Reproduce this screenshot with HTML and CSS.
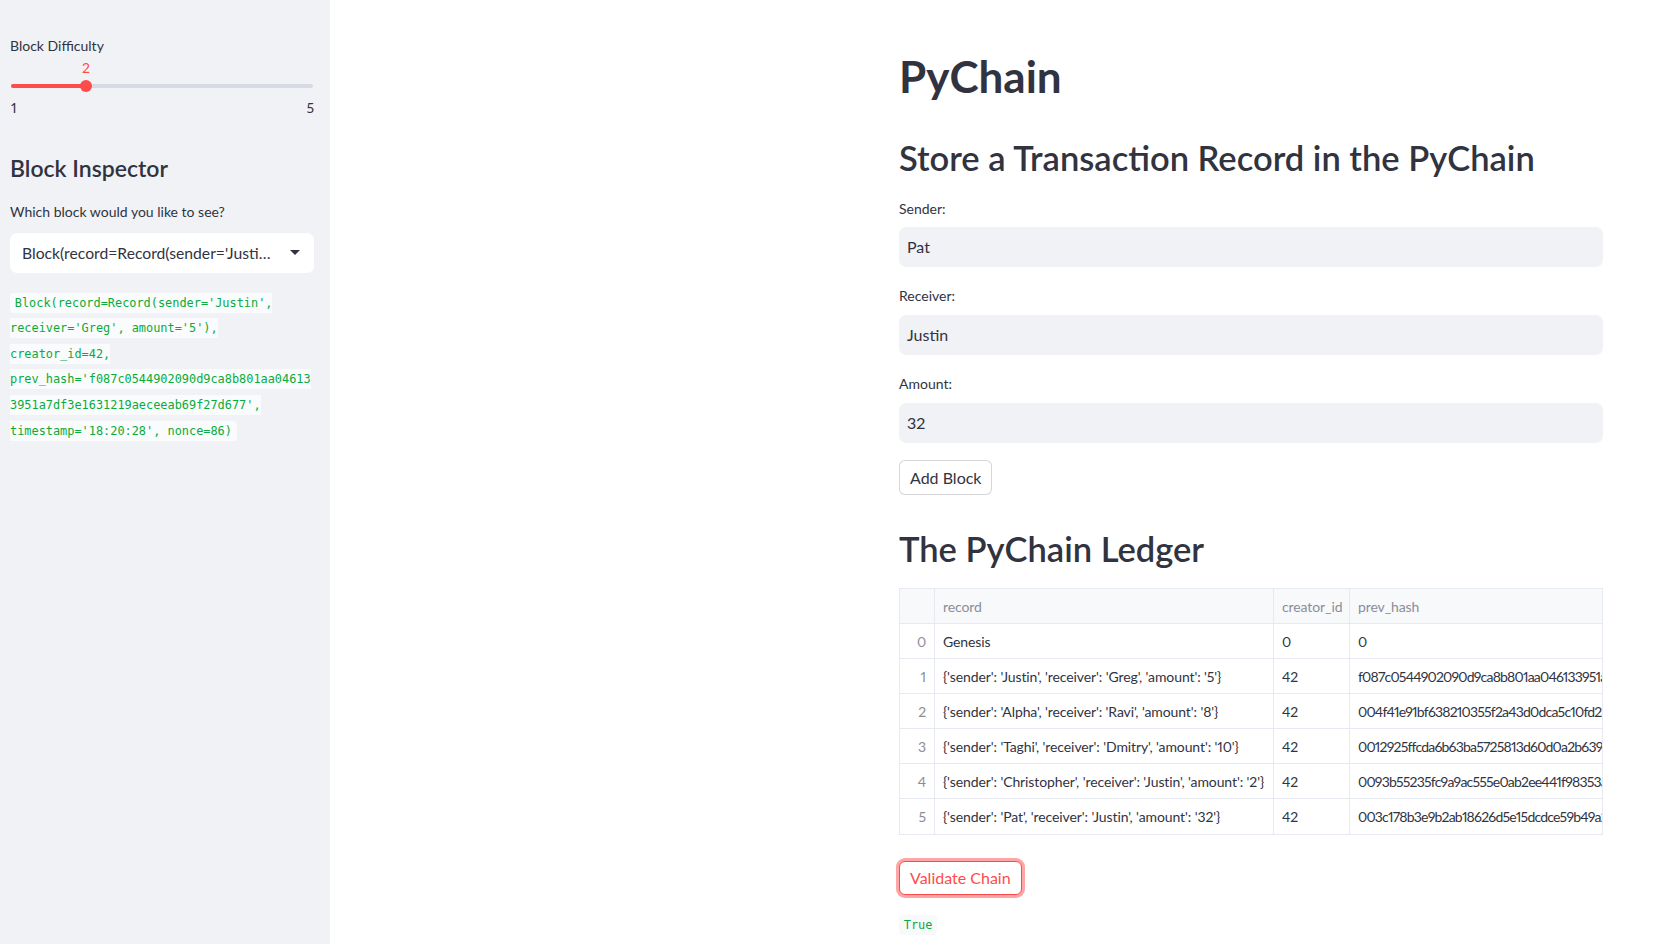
FILE: index.html
```html
<!DOCTYPE html>
<html>
<head>
<meta charset="utf-8">
<title>PyChain</title>
<link rel="stylesheet" href="styles.css">
</head>
<body>
<div class="app">
  <aside class="sidebar">
    <div class="field-label">Block Difficulty</div>
    <div class="slider">
      <div class="slider-value-row"><span class="slider-value">2</span></div>
      <div class="slider-track">
        <div class="slider-fill"></div>
        <div class="slider-thumb"></div>
      </div>
      <div class="slider-ticks"><span>1</span><span>5</span></div>
    </div>
    <h2 class="side-title">Block Inspector</h2>
    <div class="field-label">Which block would you like to see?</div>
    <div class="select">
      <span class="select-text">Block(record=Record(sender='Justi…</span>
      <svg class="select-caret" width="10" height="5" viewBox="0 0 10 5"><path d="M0 0 L10 0 L5 5 Z" fill="#31333f"/></svg>
    </div>
    <p class="code-para"><code class="inline-code">Block(record=Record(sender='Justin',<br>receiver='Greg', amount='5'),<br>creator_id=42,<br>prev_hash='f087c0544902090d9ca8b801aa04613<br>3951a7df3e1631219aeceeab69f27d677',<br>timestamp='18:20:28', nonce=86)</code></p>
  </aside>
  <main class="main">
    <div class="content">
      <h1 class="title">PyChain</h1>
      <h2 class="section">Store a Transaction Record in the PyChain</h2>
      <div class="form-field">
        <div class="field-label">Sender:</div>
        <div class="text-input">Pat</div>
      </div>
      <div class="form-field">
        <div class="field-label">Receiver:</div>
        <div class="text-input">Justin</div>
      </div>
      <div class="form-field">
        <div class="field-label">Amount:</div>
        <div class="text-input">32</div>
      </div>
      <button class="btn">Add Block</button>
      <h2 class="section ledger">The PyChain Ledger</h2>
      <div class="table-wrap">
        <table class="ledger-table">
          <colgroup>
            <col class="c-idx"><col class="c-rec"><col class="c-cid"><col class="c-hash">
          </colgroup>
          <thead>
            <tr><th class="idx"></th><th>record</th><th>creator_id</th><th>prev_hash</th></tr>
          </thead>
          <tbody>
            <tr><td class="idx">0</td><td>Genesis</td><td>0</td><td>0</td></tr>
            <tr><td class="idx">1</td><td>{'sender': 'Justin', 'receiver': 'Greg', 'amount': '5'}</td><td>42</td><td class="hash">f087c0544902090d9ca8b801aa046133951a7df3e1631219aeceeab69f27d677</td></tr>
            <tr><td class="idx">2</td><td>{'sender': 'Alpha', 'receiver': 'Ravi', 'amount': '8'}</td><td>42</td><td class="hash">004f41e91bf638210355f2a43d0dca5c10fd2a0c7d9e4b0b1f6a2f3c5e9d8a7b</td></tr>
            <tr><td class="idx">3</td><td>{'sender': 'Taghi', 'receiver': 'Dmitry', 'amount': '10'}</td><td>42</td><td class="hash">0012925ffcda6b63ba5725813d60d0a2b639e4a1c7f0b2d8e3a5c6f9b1d4e7a2</td></tr>
            <tr><td class="idx">4</td><td>{'sender': 'Christopher', 'receiver': 'Justin', 'amount': '2'}</td><td>42</td><td class="hash">0093b55235fc9a9ac555e0ab2ee441f98353a7c2e1d0b4f6a9c8e5d3b2a1f0e7</td></tr>
            <tr><td class="idx">5</td><td>{'sender': 'Pat', 'receiver': 'Justin', 'amount': '32'}</td><td>42</td><td class="hash">003c178b3e9b2ab18626d5e15dcdce59b49a2f6e1c3d7b8a0e4f5c9d2b6a1e3f</td></tr>
          </tbody>
        </table>
      </div>
      <button class="btn btn-focus">Validate Chain</button>
      <p class="result"><code class="inline-code">True</code></p>
    </div>
  </main>
</div>
</body>
</html>
```
FILE: styles.css
```css
* { box-sizing: border-box; }
html, body { margin: 0; padding: 0; }
body {
  font-family: "Lato", "Noto Sans", sans-serif;
  font-variant-numeric: proportional-nums;
  color: #31333f;
  background: #ffffff;
  width: 1659px;
  height: 944px;
  overflow: hidden;
}
.app { display: flex; height: 944px; }

.sidebar {
  width: 330px;
  flex: none;
  background: #f0f2f6;
  padding: 35px 16px 0 10px;
  display: flex;
  flex-direction: column;
}
.field-label {
  font-size: 14px;
  line-height: 22.4px;
  color: #31333f;
}
.slider { margin-top: 0; }
.slider-value-row { position: relative; height: 22.4px; }
.slider-value {
  position: absolute;
  left: 76px;
  width: 0;
  display: flex;
  justify-content: center;
  font-size: 14px;
  line-height: 22.4px;
  color: #ff4b4b;
}
.slider-track {
  position: relative;
  height: 12px;
  margin: 0 1px 0 1px;
}
.slider-track::before {
  content: "";
  position: absolute;
  left: 0; right: 0; top: 4px;
  height: 4px;
  border-radius: 2px;
  background: #d5dae5;
}
.slider-fill {
  position: absolute;
  left: 0; top: 4px;
  width: 75px; height: 4px;
  border-radius: 2px;
  background: #ff4b4b;
}
.slider-thumb {
  position: absolute;
  left: 69px; top: 0;
  width: 12px; height: 12px;
  border-radius: 50%;
  background: #ff4b4b;
}
.slider-ticks {
  display: flex;
  justify-content: space-between;
  margin-top: 5px;
  font-size: 14px;
  line-height: 22.4px;
  padding-left: 1px;
}
.side-title {
  margin: 34px 0 18px 0;
  font-size: 23px;
  line-height: 30px;
  font-weight: 600;
  color: #31333f;
}
.select {
  margin-top: 9px;
  height: 40px;
  background: #ffffff;
  border-radius: 7px;
  display: flex;
  align-items: center;
  justify-content: space-between;
  padding: 0 14px 0 12px;
}
.select-text { font-size: 15.7px; white-space: nowrap; }
.select-caret { flex: none; }
.code-para {
  margin: 15px 0 0 0;
  font-size: 16px;
  line-height: 25.6px;
}
.inline-code {
  font-family: "DejaVu Sans Mono", "Liberation Mono", monospace;
  font-size: 11.9px;
  line-height: 1.2;
  color: #09ab3b;
  background: #fafbfc;
  padding: 0.25em 0.4em;
  border-radius: 4px;
  -webkit-box-decoration-break: slice;
  box-decoration-break: slice;
}

.main { flex: 1; }
.content {
  width: 704px;
  margin-left: 569px;
  padding-top: 50px;
  display: flex;
  flex-direction: column;
  align-items: flex-start;
}
.title {
  margin: 0;
  font-size: 44px;
  line-height: 52.8px;
  font-weight: 700;
}
.section {
  margin: 33px 0 0 0;
  font-size: 34.5px;
  line-height: 43.2px;
  font-weight: 600;
}
.form-field { width: 100%; margin-top: 18.5px; }
.form-field .field-label { margin-bottom: 7px; }
.text-input {
  height: 40px;
  background: #f0f2f6;
  border-radius: 7px;
  padding: 0 8px;
  display: flex;
  align-items: center;
  font-size: 16px;
}
.btn {
  margin-top: 17px;
  height: 35px;
  padding: 0 10px;
  font-family: inherit;
  font-size: 16px;
  color: #31333f;
  background: #ffffff;
  border: 1px solid rgba(49, 51, 63, 0.2);
  border-radius: 6px;
}
.ledger { margin-top: 32px; }
.table-wrap {
  margin-top: 18px;
  width: 100%;
  overflow: hidden;
  border: 1px solid #e6e9ef;
  border-left: none;
}
.ledger-table {
  table-layout: fixed;
  width: 900px;
  border-collapse: collapse;
  font-size: 14px;
  letter-spacing: -0.1px;
}
.c-idx { width: 35px; }
.c-rec { width: 339px; }
.c-cid { width: 76px; }
.c-hash { width: 450px; }
.ledger-table th, .ledger-table td {
  height: 35px;
  padding: 0 8px;
  border: 1px solid #e6e9ef;
  text-align: left;
  font-weight: 400;
  white-space: nowrap;
  overflow: hidden;
}
.ledger-table .hash { letter-spacing: -0.8px; }
.ledger-table tr:first-child th { border-top: none; }
.ledger-table tbody tr:last-child td { border-bottom: none; }
.ledger-table th { background: #f8f9fb; color: #8b8d98; }
.ledger-table .idx { text-align: right; color: #8b8d98; padding-right: 8px; }
.btn-focus {
  margin-top: 26px;
  height: 34px;
  color: #ff4b4b;
  border-color: #ff4b4b;
  box-shadow: 0 0 0 3px rgba(255, 75, 75, 0.5);
}
.result {
  margin: 15px 0 0 0;
  font-size: 16px;
  line-height: 25.6px;
}
.result .inline-code { background: #f8f9fb; }
```
